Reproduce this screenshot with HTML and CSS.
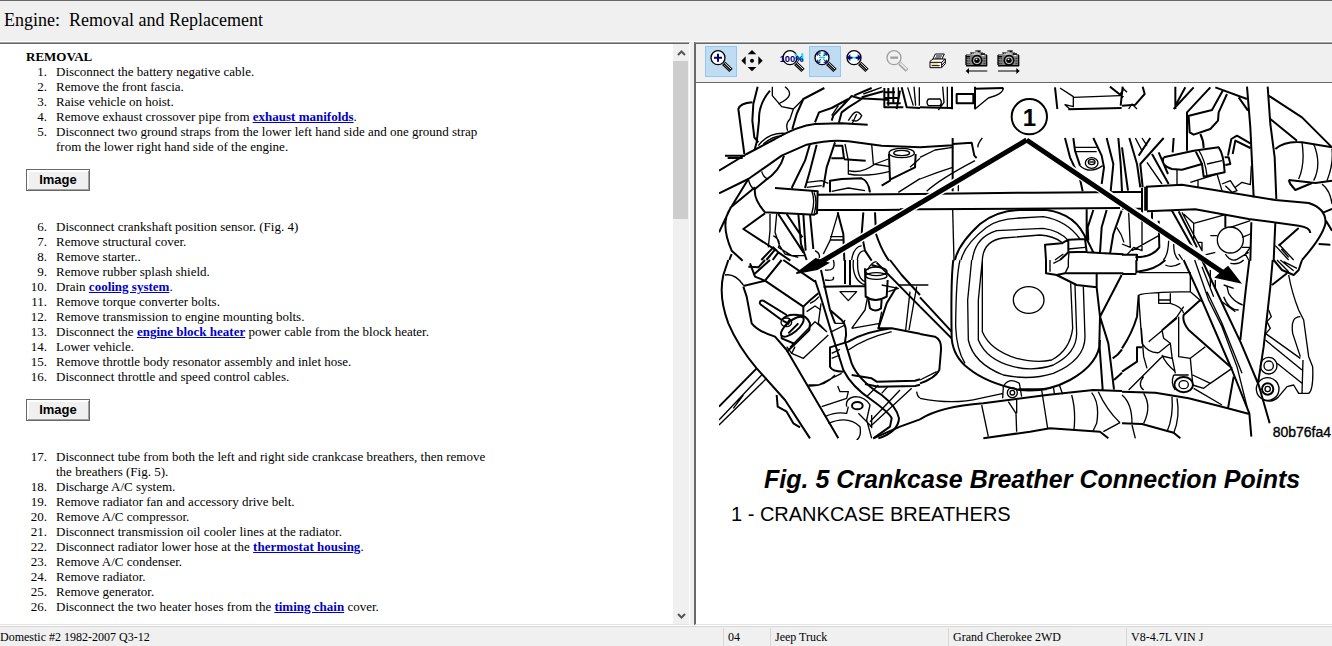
FILE: index.html
```html
<!DOCTYPE html>
<html lang="en">
<head>
<meta charset="utf-8">
<title>Engine: Removal and Replacement</title>
<link rel="stylesheet" href="styles.css">
</head>
<body>
<svg class="defs" aria-hidden="true">
  <defs>
    <g id="lens">
      <path d="M44 40L66 61" stroke="#000" stroke-width="14"/>
      <path d="M47 39L66 57" stroke="#fff" stroke-width="3"/>
      <path d="M44 44L63 62" stroke="#888" stroke-width="3"/>
      <circle cx="27" cy="23" r="21" fill="#fff" stroke="#000" stroke-width="4"/>
    </g>
    <g id="camera">
      <path d="M3 12h12V6h15V0h18v6h6v6h12v38H3z" fill="#808080"/>
      <path d="M3 47h62V15M3 20h12M18 10h9M33 4h12M48 12h12M3 15v30" fill="none" stroke="#000" stroke-width="4"/>
      <path d="M5 25h12M5 33h12M5 41h12M56 25h8M56 33h8M56 41h8" stroke="#000" stroke-width="3" stroke-dasharray="3 3"/>
      <path d="M20 12h24M32 6h6M50 17h8" stroke="#fff" stroke-width="3"/>
      <circle cx="36" cy="31" r="14" fill="#c0c0c0" stroke="#000" stroke-width="5"/>
      <circle cx="36" cy="31" r="8"/>
      <path d="M32 28h5" stroke="#fff" stroke-width="4"/>
    </g>
  </defs>
</svg>
<div class="app">
  <header class="title-bar"><h1>Engine:&nbsp; Removal and Replacement</h1></header>
  <div class="panes">
    <section class="procedure">
      <div class="procedure-text">
        <h2>REMOVAL</h2>
        <ol>
          <li><span>Disconnect the battery negative cable.</span></li>
          <li><span>Remove the front fascia.</span></li>
          <li><span>Raise vehicle on hoist.</span></li>
          <li><span>Remove exhaust crossover pipe from <a href="#">exhaust manifolds</a>.</span></li>
          <li><span>Disconnect two ground straps from the lower left hand side and one ground strap from the lower right hand side of the engine.</span></li>
        </ol>
        <button class="image-button" type="button">Image</button>
        <ol class="from-6">
          <li><span>Disconnect crankshaft position sensor. (Fig. 4)</span></li>
          <li><span>Remove structural cover.</span></li>
          <li><span>Remove starter..</span></li>
          <li><span>Remove rubber splash shield.</span></li>
          <li><span>Drain <a href="#">cooling system</a>.</span></li>
          <li><span>Remove torque converter bolts.</span></li>
          <li><span>Remove transmission to engine mounting bolts.</span></li>
          <li><span>Disconnect the <a href="#">engine block heater</a> power cable from the block heater.</span></li>
          <li><span>Lower vehicle.</span></li>
          <li><span>Remove throttle body resonator assembly and inlet hose.</span></li>
          <li><span>Disconnect throttle and speed control cables.</span></li>
        </ol>
        <button class="image-button" type="button">Image</button>
        <ol class="from-17">
          <li><span>Disconnect tube from both the left and right side crankcase breathers, then remove the breathers (Fig. 5).</span></li>
          <li><span>Discharge A/C system.</span></li>
          <li><span>Remove radiator fan and accessory drive belt.</span></li>
          <li><span>Remove A/C compressor.</span></li>
          <li><span>Disconnect transmission oil cooler lines at the radiator.</span></li>
          <li><span>Disconnect radiator lower hose at the <a href="#">thermostat housing</a>.</span></li>
          <li><span>Remove A/C condenser.</span></li>
          <li><span>Remove radiator.</span></li>
          <li><span>Remove generator.</span></li>
          <li><span>Disconnect the two heater hoses from the <a href="#">timing chain</a> cover.</span></li>
        </ol>
      </div>
      <div class="scrollbar">
        <button type="button" aria-label="Scroll up"><svg width="9" height="6" viewBox="0 0 9 6"><path d="M1 5L4.500 1.500L8 5"/></svg></button>
        <div class="track"><div class="thumb"></div></div>
        <button type="button" aria-label="Scroll down"><svg width="9" height="6" viewBox="0 0 9 6"><path d="M1 1L4.500 4.500L8 1"/></svg></button>
      </div>
    </section>

    <section class="viewer">
      <div class="toolbar">
        <div class="tools">
          <button class="tool active" type="button" aria-label="Zoom in"><svg viewBox="0 0 72 72"><use href="#lens"/><path d="M15 23h24M27 11v24" stroke="#000080" stroke-width="6"/></svg></button>
          <button class="tool" type="button" aria-label="Pan"><svg viewBox="0 0 72 72"><path d="M33 0L46 13H20zM33 64L46 51H20zM1 32L14 19V45zM65 32L52 19V45z"/><circle cx="33" cy="32" r="6"/></svg></button>
        </div>
        <div class="tools">
          <button class="tool" type="button" aria-label="Actual size"><svg viewBox="0 0 72 72"><use href="#lens"/><path d="M42 12L62 32M64 10v22" stroke="#00e5ff" stroke-width="6"/><text class="percent" x="-4" y="35">100%</text></svg></button>
          <button class="tool active" type="button" aria-label="Fit to window"><svg viewBox="0 0 72 72"><use href="#lens"/><path d="M18 9h6M37 9v6h-7M18 37l5-6M37 31v7M18 23h19" fill="none" stroke="#00e5ff" stroke-width="4"/><path d="M13 17v-8h9M32 9h9v8M41 29v8h-9M22 37h-9v-8M15 11l8 8M39 11l-8 8M39 35l-8-8M15 35l8-8" fill="none" stroke="#000080" stroke-width="3"/></svg></button>
          <button class="tool" type="button" aria-label="Fit to width"><svg viewBox="0 0 72 72"><use href="#lens"/><path d="M16 23h22" stroke="#00e5ff" stroke-width="5"/><path d="M5 23L16 13V20H22V26H16V33zM49 23L38 13V20H32V26H38V33z" fill="#000080"/></svg></button>
        </div>
        <div class="tools">
          <button class="tool" type="button" aria-label="Zoom out" disabled><svg viewBox="0 0 72 72"><path d="M44 40L66 61" stroke="#a0a0a0" stroke-width="12"/><path d="M46 40L65 58" stroke="#f0f0f0" stroke-width="5"/><circle cx="27" cy="23" r="21" fill="none" stroke="#a0a0a0" stroke-width="4"/><path d="M16 23h23" stroke="#a0a0a0" stroke-width="7"/></svg></button>
        </div>
        <div class="tools">
          <button class="tool" type="button" aria-label="Print"><svg viewBox="0 0 72 72"><g fill="#fff" stroke="#000" stroke-width="3" stroke-linejoin="round"><path d="M22 31L31 12H58L49 31z"/><path d="M15 34L24 27H61V41L50 53H15z"/><path d="M15 37H50V53M50 37L61 27M51 45L61 34"/></g><path d="M33 18h18M30 24h18M20 47h24" stroke="#000" stroke-width="3"/><path d="M20 42h18" stroke="#d8c800" stroke-width="3"/></svg></button>
        </div>
        <div class="tools">
          <button class="tool" type="button" aria-label="Previous picture"><svg viewBox="0 0 72 72"><use href="#camera"/><path d="M8 63H67" stroke="#000" stroke-width="3"/><path d="M2 63L12 54V72z"/></svg></button>
          <button class="tool" type="button" aria-label="Next picture"><svg viewBox="0 0 72 72"><use href="#camera"/><path d="M3 63H62" stroke="#000" stroke-width="3"/><path d="M68 63L58 54V72z"/></svg></button>
        </div>
      </div>

      <figure class="plate">
        <svg class="engine" viewBox="0 0 1839 1062" role="img" aria-label="Engine bay with crankcase breathers">
          <g fill="none" stroke="#000" stroke-width="4" stroke-linejoin="round">
            <g transform="translate(-12 -6)">
              <path class="bold" d="M12 260L95 210L180 165Q250 125 300 120L380 118L458 122M12 328L100 285L200 215L275 182Q350 165 400 172L500 185L615 190M88 210L70 75Q75 58 112 55M128 8L115 60L112 110L118 160L130 175M165 20Q130 60 132 110L125 175L118 200M328 12L265 45L245 90L232 135M300 115L312 85L350 72L400 45M350 110L355 95L410 36L440 45L400 70L380 85L372 115M430 43L520 47M418 34L470 12M440 40L505 22M30 215h60M38 222h45"/>
              <path d="M172 8L172 35L200 68L235 75L265 45M210 8Q245 35 190 60M235 75L225 105Q210 120 218 140M130 185Q160 145 210 148M145 180Q175 155 200 156M400 110L410 95Q425 72 440 95Q430 118 410 108M412 118L425 90M445 30L500 10M550 10v50M578 10L595 65M597 8L602 65M613 10v55M370 65L350 95"/>
              <path class="bold" d="M508 12V70H565M520 12V65M535 10V60M508 25h32M508 42h40M515 58h42M560 10L575 70L615 72M555 20L545 75"/>
              <path class="bold" d="M207 215Q195 260 150 290L120 315Q115 345 150 385L300 392M180 312L290 320L308 322L306 388L295 392M308 332L615 330M308 378L500 378L560 377M100 285L45 375L12 445M45 372L120 310M45 375Q15 420 50 500L83 530M150 388L85 435L185 500M285 180L270 230L230 312M305 182L285 260L270 312M360 175L335 250L325 310M360 185h22l5 38h-38M387 226l65 4"/>
              <path d="M290 320Q302 350 290 390M297 325Q308 350 298 388M100 285Q105 310 120 318M140 262Q145 280 160 285M390 180L400 230V270Q450 280 525 262M400 260Q440 270 480 240L520 225M470 180L475 240L525 248M615 223L585 250M615 284L550 325M275 295L320 290L340 298M275 310L320 305M350 322L400 312L450 320"/>
              <path class="bold" d="M345 325L345 290L380 285L440 283Q460 290 465 325M522 210L525 290L500 305M525 287L600 250L602 210"/>
              <ellipse cx="560" cy="207" rx="38" ry="14"/><ellipse cx="560" cy="207" rx="24" ry="8"/>
              <path d="M165 390L165 440L160 490M185 390L180 445L192 480M370 385L345 470L325 510M345 458h40M345 468h40M410 528Q415 490 440 485M427 528Q430 500 450 500M175 455Q200 470 190 490L230 515H270M192 482L210 510L250 520M300 500Q320 510 310 530"/>
              <path class="bold" d="M190 390L265 505M215 390L262 460M250 390L258 480L275 528M265 390L272 500M285 390L295 495M368 385L385 450L388 530M445 385L440 450L450 500L470 530M480 385L483 450Q500 500 522 530M139 528L175 490L190 505L173 528M190 505L226 530M43 528L50 510M154 528L180 497"/>
            </g>
            <g transform="translate(603 -6)">
              <path class="bold" d="M0 70L95 72M96 8v68M165 8v68M165 14L250 12M110 30h50v28h-50zM405 10L412 75M445 76L605 72M608 8L602 65M570 8L610 40"/>
              <path d="M25 45h35q8 10 0 20h-35q-8-10 0-20M68 8L72 55L55 78M82 8v65M250 12Q250 30 205 42L165 75M420 12L460 38V68L435 62L450 76M460 40L600 35M600 30l10-12"/>
              <circle class="bold" cx="328" cy="98" r="53"/>
              <path class="bold" d="M98 162v160M98 180L155 176L163 215L170 222M0 190L98 184M435 162L450 220L480 285L488 322M460 162L465 200L480 245M520 162L545 215L552 250L545 300M560 162L580 240L572 322M595 162L602 240L606 322"/>
              <path d="M187 162Q172 180 174 190M0 220L45 198L98 190M0 285Q50 265 98 250M20 322Q60 285 165 230M115 322v-20M465 190h65M465 203h65M480 245Q510 272 548 245"/>
              <ellipse cx="515" cy="237" rx="19" ry="16"/><ellipse cx="515" cy="234" rx="10" ry="8"/><path d="M508 234h14"/>
              <path class="bold" d="M0 330L340 326L610 324M-60 376L0 376L600 372"/>
              <path d="M98 376L102 530"/>
              <path class="bold" d="M105 528Q115 480 180 420Q230 380 300 378H380Q470 390 500 470M378 528L375 482L425 478L445 467L495 465L500 503L445 505L420 528M445 465v38M500 376V465L520 505M520 378L503 430L505 470M560 378L545 430L540 505M605 380L580 450L570 510M500 505L610 511"/>
              <path d="M123 528Q135 480 200 430Q230 405 300 402L370 398Q440 410 480 465M157 528Q165 460 230 440L370 433Q420 440 445 470M187 528Q190 470 250 462L360 453Q400 455 425 475M445 495L495 490M405 528L430 510M590 430Q605 450 612 475M447 505L445 528"/>
            </g>
            <g transform="translate(1209 -6)">
              <path class="bold" d="M62 8L68 30L40 62L0 65M160 8V75M155 75L215 10M190 10L160 65M265 10L195 85V200M195 97L270 78L302 20M315 30L290 85L288 110L265 135L215 152L203 145L200 97M280 10L375 45M350 40L378 80M375 8L385 130L395 340M437 8L445 120L458 220L463 345M440 35L540 100L630 190M445 105L525 170M460 195Q490 170 540 175L630 190M500 288L580 297L630 290M500 288L505 300L520 318L570 297M385 178L345 155L328 165L318 215M385 192L340 170L332 210"/>
              <path d="M20 75L30 60L45 75M0 10L15 25M540 175Q550 240 530 285M575 180Q600 240 575 290M630 195Q635 240 615 290M600 300Q625 320 630 360"/>
              <path class="bold" d="M125 220L215 200L290 190Q305 210 308 265L245 278L240 240M125 220Q115 245 150 255L180 257L240 240L220 200M308 220h12l5 20-15 3M235 150Q245 170 245 192M155 162L152 205M0 190L18 320M22 162L45 240L55 310M85 162L50 215M125 162L55 240L62 310M90 210L140 300M110 205L138 270"/>
              <path d="M230 198Q250 230 255 275M255 240L300 230M165 257V300M205 295L285 270L300 320M300 300L325 290L345 320L330 325L310 305M340 310L360 295L385 302L388 245M40 162L60 200M60 162L75 185M75 235L120 300M228 290v20"/>
              <path d="M72 308V380" stroke-width="11"/><path class="bold" d="M60 312v75M0 324h60M0 374h60"/>
              <path class="bold" d="M72 308L180 302L300 322L460 348L560 357Q615 375 610 420Q600 460 540 528M75 382L220 376L380 405L530 425Q565 430 565 447M605 385L630 375M612 410L630 440M590 480L625 482M530 432L470 485M460 415L455 530M388 415L385 530M310 395V430M150 380L233 528M170 382L225 490M0 512H45V530M110 410L112 490Q90 520 40 520M90 385v30"/>
              <circle cx="325" cy="468" r="39"/>
              <path d="M185 390L215 418L310 392M215 418V475M265 455h20M325 430L385 410M360 460L385 450M360 490L385 490L370 510L380 528M310 510Q325 535 345 526L380 505M180 385L240 500V475H225M240 515L280 505M20 385L25 490L0 480M30 500L110 455M60 385V500L35 490L15 512M140 470Q138 515 124 528M155 480Q155 515 170 528M170 510L182 528M460 485L500 528M470 480L515 528M478 495L500 520"/>
            </g>
            <g transform="translate(-12 522)">
              <path class="bold" d="M40 0L25 45Q10 110 40 190Q70 260 125 325L210 420L285 535M85 80L95 110L110 190Q130 215 180 230L215 270L370 535M85 78L150 62L265 140M205 0L300 65M105 10L120 50L150 62L200 0M115 45L165 0M100 20L130 22L150 0M265 140Q285 120 310 100M265 140v28"/>
              <path d="M30 45Q60 40 85 75M285 130Q300 125 312 110M275 155L300 138L318 150"/>
              <path class="bold" d="M135 132L200 180M145 122L215 165M135 132Q132 120 145 122M200 225V235L240 252M200 180Q215 160 250 165Q275 165 285 190L283 210L240 252L215 275"/>
              <ellipse class="bold" cx="232" cy="200" rx="42" ry="17" transform="rotate(-40 232 200)"/><ellipse cx="214" cy="187" rx="16" ry="13"/><path class="bold" d="M203 182l20 10M210 200l15-22M220 220l30-30"/>
              <path d="M215 260L230 280L265 295L340 225M225 262L300 185L335 215L310 190L318 130M230 280L240 260"/>
              <path class="bold" d="M300 60L320 120L350 220L385 330Q410 380 470 420Q525 460 530 475L525 500L475 535M318 30L345 150L380 180Q400 200 390 245L410 310Q430 360 500 405Q545 440 552 475Q550 515 490 535M345 150L360 190M325 80L450 78M390 0V72M405 0v75M450 25L452 110Q480 130 515 110L518 60M460 118L465 145Q480 158 498 145L500 118M525 0L560 45L615 105M485 8L615 140"/>
              <path d="M360 190H385L390 180M350 215L390 195M375 95L425 95L400 122zM355 50Q360 65 330 60M330 30Q365 35 355 0M428 0Q425 55 450 65M415 0Q410 60 450 75M458 30Q470 5 485 5M500 75L550 85L520 95M500 155L490 205M550 75h65M605 80L582 210M585 95L572 210M410 205L450 150L458 110M410 205L495 190"/>
              <ellipse cx="484" cy="34" rx="32" ry="13"/><ellipse cx="484" cy="48" rx="32" ry="10"/><path class="bold" d="M470 15l30 8"/>
              <path class="bold" d="M545 80L515 130L490 205L530 205L615 221M530 205Q450 215 400 245L345 262V320Q350 335 385 335M410 345L470 355L485 365L600 362L615 358M450 372L490 380L600 378L615 374"/>
              <path d="M350 280L375 268M350 295L375 285M400 270Q450 235 530 215M280 375L310 375L380 340M280 378Q330 380 360 345M320 440L395 415L400 395L375 395L368 378M395 440Q390 415 420 410Q450 410 465 435L455 480L470 535M330 470Q360 455 395 460L400 440M340 490Q400 465 435 500Q440 530 425 540M430 460L470 500M470 465v40"/>
              <ellipse class="bold" cx="427" cy="437" rx="16" ry="11"/>
              <path d="M465 500L590 385M465 485L555 390M455 410L490 375M500 400l18-20M605 395Q607 410 615 414M12 480L140 345M12 495L155 355M55 445L85 405"/>
              <path class="bold" d="M475 535L555 500L615 478M12 440L125 325M185 405L188 440L215 455L235 490L255 502"/>
            </g>
            <g transform="translate(603 522)">
              <path class="bold" d="M100 0Q92 60 95 235Q100 290 145 325Q200 370 300 390Q380 398 450 360Q540 310 540 240"/>
              <path d="M120 0Q108 50 107 200Q110 270 135 310M155 0L143 120L145 240Q160 310 250 345Q330 362 400 340Q495 300 495 230L490 80M187 0L175 120V240Q200 300 280 320Q340 335 400 315Q470 280 470 220L465 75M187 0V215Q210 270 290 295Q350 310 395 300Q450 270 458 205L452 70"/>
              <ellipse cx="326" cy="120" rx="46" ry="40"/>
              <path class="bold" d="M378 0V40L410 45L435 40H610M410 45L470 75L530 82V40M530 82L540 170L538 250L548 388M605 45L540 170L565 250L582 388M578 295Q595 285 606 268M582 360L606 338M0 112L95 215M0 140L95 235M0 222L45 230Q65 240 63 270L58 330Q45 355 0 370M0 478Q60 440 190 430L380 405L520 390L606 393"/>
              <path d="M390 0v35M435 40L445 20V0M400 10l20-10M0 75h25M0 360L50 335M0 415Q100 435 180 415L250 400M248 415L250 380Q265 350 298 370L305 410M185 435L205 530M265 425L288 460L290 515M290 415V460M365 390L383 505M400 380l3 20M418 375l10 28M455 405Q468 450 462 510M515 398Q540 430 530 490L518 515M535 395Q560 450 600 488M550 515L600 488"/>
              <circle cx="277" cy="398" r="15"/><circle cx="277" cy="398" r="7"/>
              <path class="bold" d="M190 535L330 515L390 505L540 515L565 535M295 388L380 388"/>
            </g>
            <g transform="translate(1209 522)">
              <path class="bold" d="M43 0V40M0 42H43M45 35Q100 30 130 0M50 105L45 170Q30 220 0 265M185 0L235 110L330 330L382 460L388 530M240 0L310 150L355 245L410 375L443 490M235 120L185 165Q180 185 200 210L330 325M382 0L370 100L355 240M452 0L445 80L425 260L408 370M450 75L495 40M455 0L480 30L515 45L530 30L540 0M0 395L100 398L200 415L300 440L382 462M335 350L318 445M0 490L60 492L155 518L175 535M0 335L45 305V262L60 262"/>
              <path d="M130 15Q150 25 175 10M50 38H205V95M50 105Q70 97 205 95M110 98v32h35v-30M110 120h35M145 130Q180 140 185 160M218 0L260 120L300 200L345 320L375 440M240 20L275 110M255 95L300 190L360 340M205 95L240 125M170 170V290L205 295L250 260M185 140L165 170L120 210L125 235L145 250L150 290L160 340M60 250Q80 280 110 278L145 250M58 205L65 290L75 325M50 110L60 250M80 245L165 175M120 285Q130 310 160 335M120 288L150 295M120 290L20 390M205 295L212 370M65 350Q45 375 65 390M155 345h45M212 345L265 370L330 325M215 385L300 435M212 375L245 385L265 370"/>
              <ellipse class="bold" cx="185" cy="374" rx="28" ry="23"/><ellipse cx="185" cy="374" rx="14" ry="12"/><path d="M155 345Q145 370 160 390"/>
              <path d="M485 5L525 25M465 0L500 35M475 0L515 32M500 45Q510 100 530 150L545 180L560 290L572 320Q575 390 560 400L530 400L515 375L495 380L470 410Q450 430 425 420M540 400L543 300M535 170Q505 170 512 220L535 290M430 220L535 295M430 240L540 330M465 310L540 370M440 150L448 170L435 185L445 205L432 220M305 110Q320 150 350 150M315 80L320 100Q335 125 362 135M300 125L340 155M305 75L335 85M265 30v50M280 60v25M325 10Q350 15 365 0"/>
              <circle cx="440" cy="317" r="25"/><circle cx="440" cy="317" r="14"/><circle cx="437" cy="387" r="34"/><circle class="bold" cx="437" cy="387" r="17"/><circle cx="437" cy="387" r="8"/>
              <path d="M0 405Q30 430 30 490M65 400Q90 440 65 490M150 410Q155 470 135 515M165 415Q175 470 155 520M30 495L40 535"/>
            </g>
            <g class="halo"><path d="M923 162L300 531M923 162L1520 560"/></g>
            <g stroke-width="15"><path d="M923 162L290 537M923 162L1520 565"/></g>
          </g>
          <path d="M232 562L290 518L328 531L295 550zM1564 590L1527 542L1512 554L1490 574z" stroke="#000" stroke-width="4"/>
          <text class="callout" x="931" y="121">1</text>
          <text class="plate-code" x="1661" y="1054">80b76fa4</text>
        </svg>
        <figcaption>
          <p class="figure-title">Fig. 5 Crankcase Breather Connection Points</p>
          <p class="figure-key">1 - CRANKCASE BREATHERS</p>
        </figcaption>
      </figure>
    </section>
  </div>
  <footer class="status-bar">
    <span>Domestic #2 1982-2007 Q3-12</span>
    <span>04</span>
    <span>Jeep Truck</span>
    <span>Grand Cherokee 2WD</span>
    <span>V8-4.7L VIN J</span>
  </footer>
</div>
</body>
</html>
```
FILE: styles.css
```css
* { box-sizing: border-box; }
html, body { height: 100%; margin: 0; }
body {
  background: #f0f0f0;
  color: #000;
  font: 13px/15px "Liberation Serif", "Times New Roman", serif;
  overflow: hidden;
}
.defs { position: absolute; width: 0; height: 0; }
.app { display: flex; flex-direction: column; height: 100%; }

.title-bar {
  flex: none;
  height: 42px;
  padding: 8px 4px;
  border-top: 1px solid #696969;
  border-bottom: 1px solid #fff;
}
.title-bar h1 { margin: 0; font-size: 18px; line-height: 22px; font-weight: normal; }

.panes {
  flex: 1;
  min-height: 0;
  display: grid;
  grid-template-columns: 690px minmax(0, 1fr);
  column-gap: 4px;
  border-bottom: 1px solid #fff;
}
.procedure {
  display: flex;
  min-height: 0;
  background: #fff;
  border-top: 1px solid #a0a0a0;
  border-right: 1px solid #fff;
  border-bottom: 1px solid #e3e3e3;
}
.procedure-text {
  flex: 1;
  padding: 5px 26px;
  border-top: 1px solid #696969;
  overflow: hidden;
}
.procedure-text h2 { margin: 0; font-size: 13px; line-height: 15px; }
ol {
  max-width: 472px;
  margin: 0;
  padding: 0;
  list-style: none;
  counter-reset: step;
}
.from-6 { counter-reset: step 5; }
.from-17 { counter-reset: step 16; }
li {
  display: grid;
  grid-template-columns: 21px 1fr;
  column-gap: 9px;
  counter-increment: step;
}
li::before { content: counter(step) "."; text-align: right; }
a { color: #0000c8; font-weight: bold; }
.image-button {
  display: block;
  width: 64px;
  height: 22px;
  margin: 15px 0 28px;
  padding: 0;
  border: 1px solid #696969;
  background: #f0f0f0;
  box-shadow: inset 1px 1px #fff, inset -1px -1px #a0a0a0, inset 2px 2px #fff;
  color: #000;
  font: bold 13px/20px "Liberation Sans", Arial, sans-serif;
}

.scrollbar {
  flex: none;
  width: 16px;
  display: flex;
  flex-direction: column;
  background: #f0f0f0;
  border-top: 1px solid #696969;
}
.scrollbar button { height: 17px; padding: 0; border: 0; background: none; }
.scrollbar svg { display: block; margin: auto; }
.scrollbar path { fill: none; stroke: #555; stroke-width: 2; }
.track { flex: 1; }
.thumb { width: 15px; height: 29%; background: #cdcdcd; }

.viewer {
  display: flex;
  flex-direction: column;
  min-width: 0;
  min-height: 0;
  overflow: hidden;
  background: #fff;
  border-top: 1px solid #a0a0a0;
  border-left: 2px solid #696969;
  border-bottom: 1px solid #e3e3e3;
}
.toolbar {
  flex: none;
  display: flex;
  gap: 8px;
  height: 40px;
  padding: 2px 9px;
  background: #f0f0f0;
  border-top: 1px solid #696969;
  border-bottom: 1px solid #696969;
}
.tools { display: flex; }
.tool {
  width: 32px;
  height: 31px;
  padding: 0 3px;
  border: 1px solid transparent;
  background: none;
}
.tool svg { display: block; width: 24px; height: 24px; overflow: visible; }
.tool.active { background: #bfdcf3; border-color: #90c8f6; }
.percent { font: bold 28px "Liberation Sans", Arial, sans-serif; fill: #000080; }

.plate { margin: 0; padding: 3px 0 0 23px; overflow: hidden; }
.engine { display: block; width: 613px; height: 354px; }
.bold { stroke-width: 6px; }
.halo { stroke: #fff; stroke-width: 24px; }
.callout { font: bold 72px "Liberation Sans", Arial, sans-serif; text-anchor: middle; }
.plate-code { font: 42px "Liberation Sans", Arial, sans-serif; stroke: #000; stroke-width: 1px; }
figcaption { padding: 24px 0 0 12px; font-family: "Liberation Sans", Arial, sans-serif; white-space: nowrap; }
figcaption p { margin: 0; }
.figure-title { padding-left: 33px; font-size: 25px; line-height: 30px; font-weight: bold; font-style: italic; }
.figure-key { margin-top: 8px; font-size: 20px; line-height: 24px; }

.status-bar {
  flex: none;
  display: grid;
  grid-template-columns: 723px 47px 178px 178px 1fr;
  height: 20px;
  padding-top: 1px;
  border-top: 1px solid #d7d7d7;
  font-size: 12px;
  line-height: 18px;
}
.status-bar span { padding-left: 4px; border-left: 1px solid #d7d7d7; }
.status-bar span:first-child { padding-left: 0; border-left: 0; }
```
